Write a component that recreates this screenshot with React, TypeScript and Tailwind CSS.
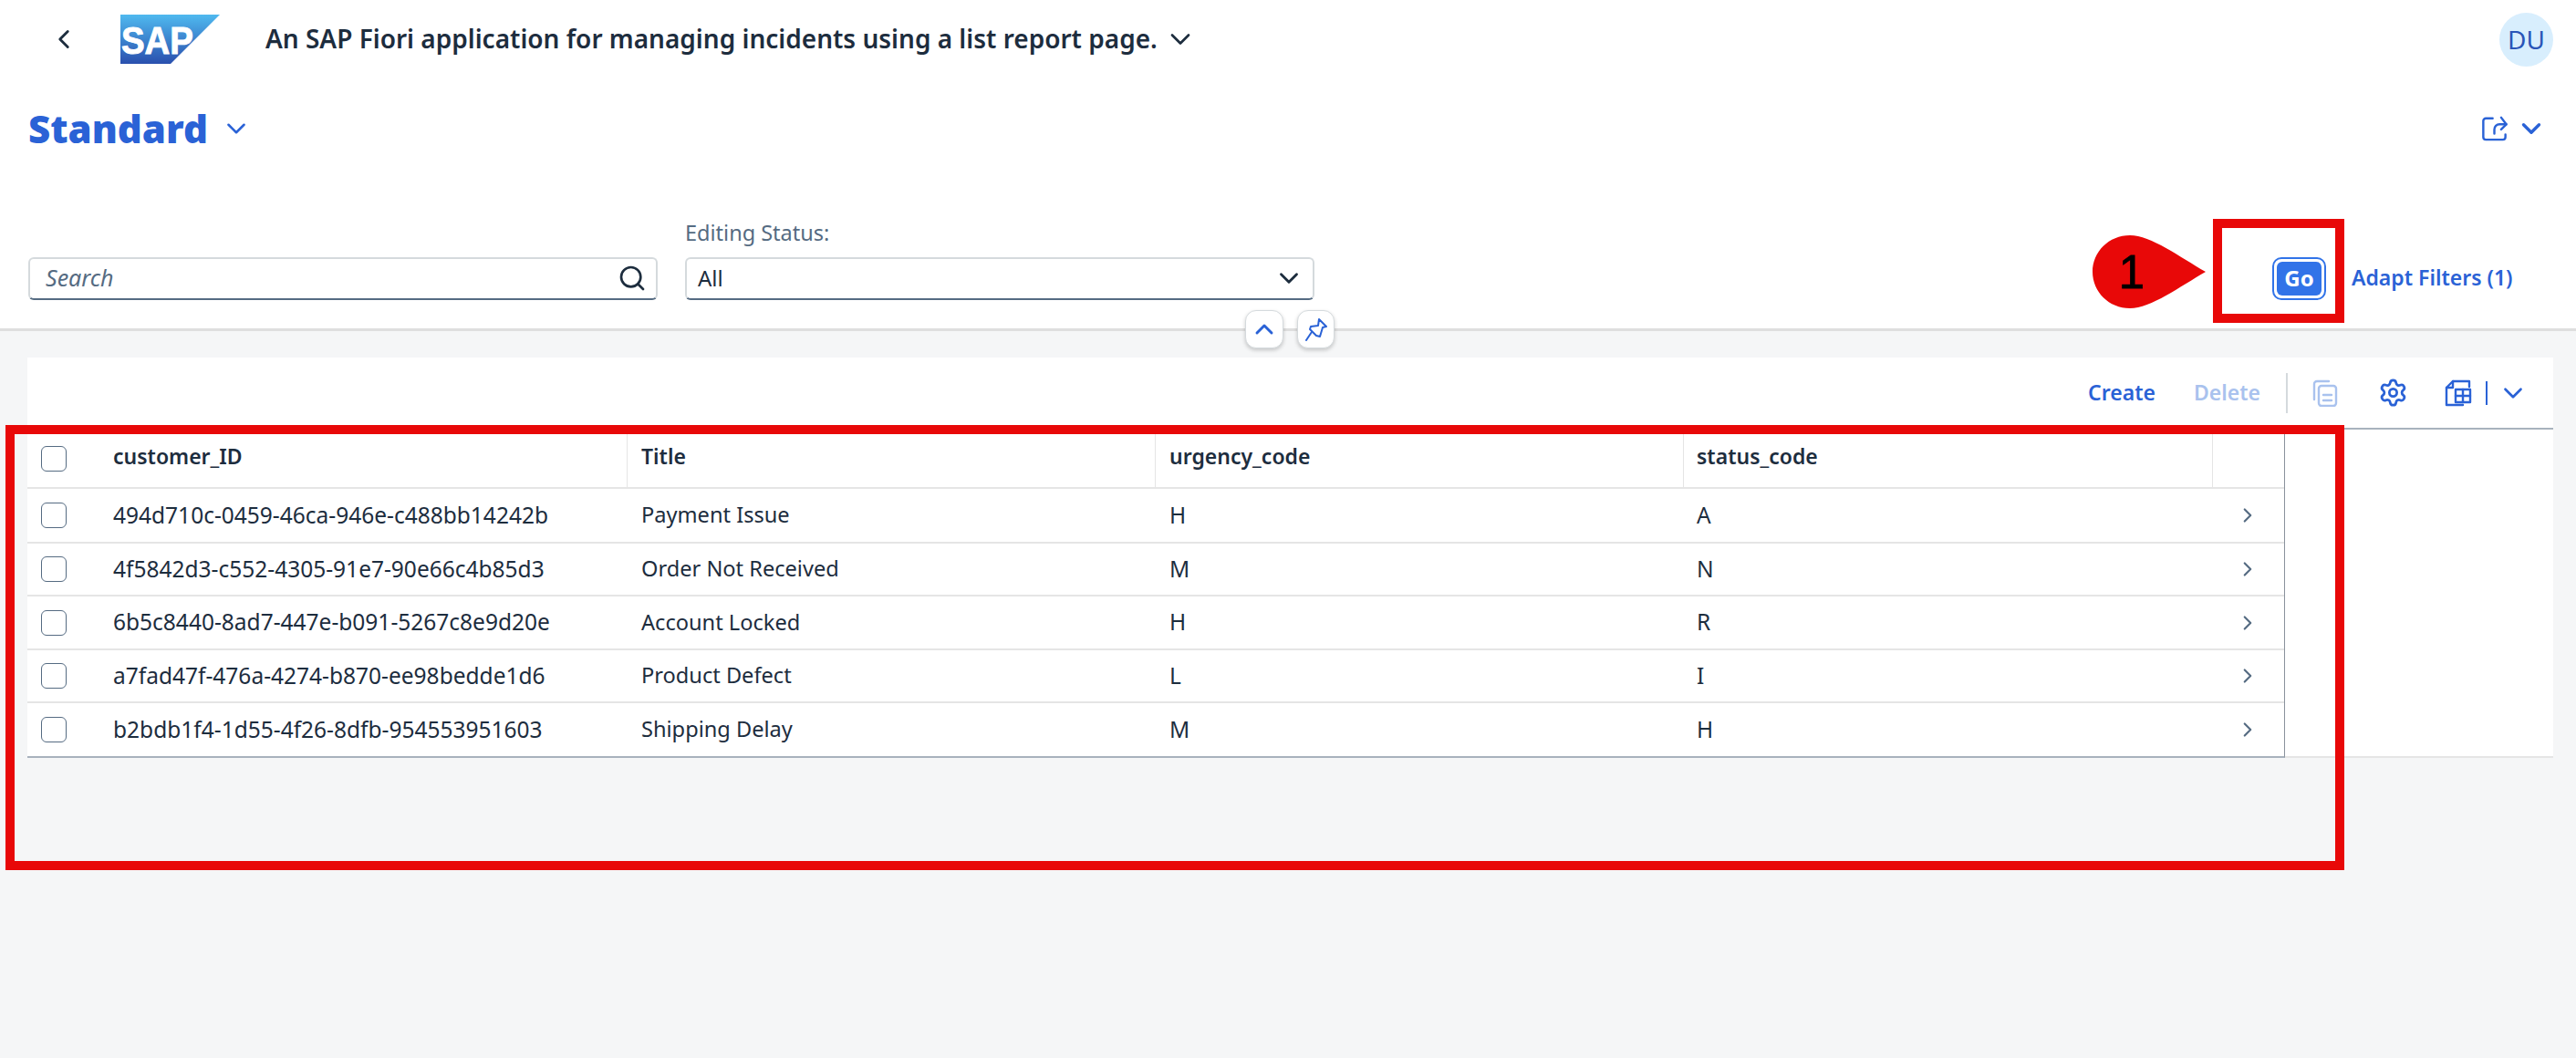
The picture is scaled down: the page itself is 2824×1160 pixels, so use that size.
import React from "react";
import { ChevronDown, ChevronLeft, ChevronRight, ChevronUp, Search, Settings } from "lucide-react";

const rows = [
  ["494d710c-0459-46ca-946e-c488bb14242b", "Payment Issue", "H", "A", "h-[60px]"],
  ["4f5842d3-c552-4305-91e7-90e66c4b85d3", "Order Not Received", "M", "N", "h-[58px]"],
  ["6b5c8440-8ad7-447e-b091-5267c8e9d20e", "Account Locked", "H", "R", "h-[59px]"],
  ["a7fad47f-476a-4274-b870-ee98bedde1d6", "Product Defect", "L", "I", "h-[58px]"],
  ["b2bdb1f4-1d55-4f26-8dfb-954553951603", "Shipping Delay", "M", "H", "h-[58px]"],
];

const grid = "grid grid-cols-[78px_579px_579px_579px_580px_80px]";

function Checkbox() {
  return <div className="w-[28px] h-[28px] ml-[15px] rounded-[6px] border border-[#556b82] bg-white" />;
}

function SapLogo() {
  return (
    <svg width="109" height="54" viewBox="0 0 109 54" className="block">
      <defs>
        <linearGradient id="sapg" x1="0" y1="0" x2="0" y2="1">
          <stop offset="0" stopColor="#4fb9ef" />
          <stop offset="1" stopColor="#2a50ae" />
        </linearGradient>
      </defs>
      <polygon points="0,0 109,0 55,54 0,54" fill="url(#sapg)" />
      <text x="1" y="43" fill="#fff" stroke="#fff" strokeWidth="1" fontFamily="'Liberation Sans', sans-serif" fontWeight="700" fontSize="43" textLength="79" lengthAdjust="spacingAndGlyphs">SAP</text>
    </svg>
  );
}

function ShareIcon() {
  return (
    <svg width="29" height="28" viewBox="0 0 30 30" fill="none" stroke="#2a62d6" strokeWidth="2.6" strokeLinecap="round" strokeLinejoin="round">
      <path d="M13 3H5a3 3 0 0 0-3 3v19a3 3 0 0 0 3 3h20a3 3 0 0 0 3-3v-3" />
      <path d="M15 21v-5a6 6 0 0 1 6-6h8" />
      <path d="M23 2l6 8-6 6" />
    </svg>
  );
}

function PinIcon() {
  return (
    <svg width="26" height="26" viewBox="0 0 26 26" fill="none" stroke="#2a62d6" strokeWidth="2" strokeLinejoin="round" strokeLinecap="round">
      <path d="M16 2l8 8-4 1-3 10-4-1-7-7 1-3 8-1z" />
      <path d="M8 16l-6 9" />
    </svg>
  );
}

function CopyIcon() {
  return (
    <svg width="28" height="30" viewBox="0 0 28 30" fill="none" stroke="#a9c2ee" strokeWidth="2.4" strokeLinecap="round" strokeLinejoin="round">
      <path d="M2 22V5a3 3 0 0 1 3-3h13" />
      <rect x="7" y="7" width="19" height="22" rx="3" />
      <path d="M12 17h9M12 23h9" />
    </svg>
  );
}

function TableIcon() {
  return (
    <svg width="30" height="30" viewBox="0 0 30 30" fill="none" stroke="#2a62d6" strokeWidth="2.4" strokeLinejoin="round" strokeLinecap="round">
      <path d="M20 28H2V9l7-7h18v6" />
      <path d="M9 2v7H2" />
      <rect x="12" y="11" width="16" height="14" fill="#fff" />
      <path d="M20 11v14M12 18h16" />
    </svg>
  );
}

export default function App() {
  return (
    <div className="relative w-[2824px] h-[1160px] overflow-hidden bg-[#f5f6f7] font-['Noto_Sans','Open_Sans',sans-serif] text-[24px] text-[#1d2d3e]">
      <div className="bg-white h-[363px] border-b-[3px] border-[#dedede] flex flex-col">
        <div className="h-[86px] flex items-center pl-[53px] pr-[25px]">
          <ChevronLeft className="w-[34px] h-[34px] text-[#1d2d3e]" strokeWidth={2} />
          <div className="ml-[45px]"><SapLogo /></div>
          <span className="ml-[50px] pb-[2px] text-[28px] font-semibold text-[#1d2d3e] leading-none">An SAP Fiori application for managing incidents using a list report page.</span>
          <ChevronDown className="ml-[7px] w-[36px] h-[36px] text-[#1d2d3e]" strokeWidth={1.8} />
          <div className="ml-auto w-[59px] h-[59px] rounded-full bg-[#d8eefd] text-[#2a55b8] text-[28px] flex items-center justify-center">DU</div>
        </div>
        <div className="h-[110px] flex items-center pl-[31px] pr-[32px] text-[#2a62d6]">
          <span className="text-[42px] font-black leading-none">Standard</span>
          <ChevronDown className="ml-[14px] w-[34px] h-[34px]" strokeWidth={1.8} />
          <div className="ml-auto flex items-center gap-[9px]">
            <ShareIcon />
            <ChevronDown className="w-[34px] h-[34px]" strokeWidth={2.4} />
          </div>
        </div>
        <div className="flex-1 flex items-end pl-[31px] pb-[31px]">
          <div className="w-[690px] h-[47px] rounded-[6px] border-2 border-[#d5dadd] border-b-[#556b82] bg-white flex items-center pl-[17px] pr-[10px] pb-[2px]">
            <span className="italic text-[#556b82] text-[25px]">Search</span>
            <Search className="ml-auto w-[32px] h-[32px] text-[#1d2d3e]" strokeWidth={2} />
          </div>
          <div className="ml-[30px] w-[690px] flex flex-col">
            <span className="text-[23.5px] leading-[30px] mb-[12px] text-[#556b82]">Editing Status:</span>
            <div className="h-[47px] rounded-[6px] border-2 border-[#d5dadd] border-b-[#556b82] bg-white flex items-center pl-[12px] pr-[9px] pb-[2px]">
              <span className="text-[24px]">All</span>
              <ChevronDown className="ml-auto w-[34px] h-[34px]" strokeWidth={2} />
            </div>
          </div>
          <div className="ml-[1050px] w-[59px] h-[47px] rounded-[10px] border-2 border-[#3173e8] bg-white p-[3px]">
            <div className="w-full h-full rounded-[6px] bg-[#3173e8] text-white font-bold text-[24px] pb-[2px] flex items-center justify-center">Go</div>
          </div>
          <span className="ml-[28px] h-[47px] pb-[2px] flex items-center text-[23px] font-semibold text-[#2a62d6] whitespace-nowrap">Adapt Filters (1)</span>
        </div>
      </div>

      <div className="pt-[29px] pl-[30px] pr-[25px]">
        <div className="bg-white h-[439px] border-b-2 border-[#e5e5e5]">
          <div className="h-[79px] border-b-2 border-[#a8b2bd] flex items-center justify-end pr-[27px] text-[#2a62d6]">
            <span className="font-semibold text-[23px]">Create</span>
            <span className="ml-[42px] font-semibold text-[23px] text-[#a9c2ee]">Delete</span>
            <div className="ml-[28px] w-[2px] h-[44px] bg-[#d5dadd]" />
            <div className="ml-[27px]"><CopyIcon /></div>
            <Settings className="ml-[44px] w-[33px] h-[33px]" strokeWidth={2} />
            <div className="ml-[40px]"><TableIcon /></div>
            <div className="ml-[15px] w-[2px] h-[26px] bg-[#2a62d6]" />
            <ChevronDown className="ml-[11px] w-[34px] h-[34px]" strokeWidth={1.9} />
          </div>
          <div className="w-[2475px] border-r border-[#8a929c] border-b-2 border-b-[#a8b2bd]">
            <div className={`${grid} h-[65px] border-b-2 border-[#e5e5e5] items-stretch font-semibold text-[23px]`}>
              <div className="flex items-center"><Checkbox /></div>
              <div className="flex items-center pl-[16px] pb-[4px] leading-none">customer_ID</div>
              <div className="flex items-center pl-[15px] pb-[4px] border-l border-[#e5e5e5] leading-none">Title</div>
              <div className="flex items-center pl-[15px] pb-[4px] border-l border-[#e5e5e5] leading-none">urgency_code</div>
              <div className="flex items-center pl-[14px] pb-[4px] border-l border-[#e5e5e5] leading-none">status_code</div>
              <div className="border-l border-[#e5e5e5]" />
            </div>
            {rows.map((r, i) => (
              <div key={r[0]} className={`${grid} ${r[4]} items-center text-[24.5px] ${i < 4 ? "border-b-2 border-[#e5e5e5]" : ""}`}>
                <Checkbox />
                <div className="pl-[16px] leading-none">{r[0]}</div>
                <div className="pl-[16px] leading-none text-[23.6px]">{r[1]}</div>
                <div className="pl-[16px] leading-none">{r[2]}</div>
                <div className="pl-[15px] leading-none">{r[3]}</div>
                <ChevronRight className="ml-[26px] w-[26px] h-[26px] text-[#556b82]" strokeWidth={2} />
              </div>
            ))}
          </div>
        </div>
      </div>

      {/* collapse and pin buttons sitting on the header edge */}
      <div className="absolute left-[1365px] top-[340px] w-[42px] h-[42px] rounded-[12px] bg-white border border-[#d5dadd] shadow-[0_2px_4px_rgba(0,0,0,0.2)] flex items-center justify-center text-[#2a62d6]">
        <ChevronUp className="w-[32px] h-[32px]" strokeWidth={2.2} />
      </div>
      <div className="absolute left-[1422px] top-[340px] w-[41px] h-[42px] rounded-[12px] bg-white border border-[#d5dadd] shadow-[0_2px_4px_rgba(0,0,0,0.2)] flex items-center justify-center">
        <PinIcon />
      </div>

      {/* red annotations */}
      <div className="absolute left-[2426px] top-[240px] w-[144px] h-[114px] border-[10px] border-[#e80808]" />
      <div className="absolute left-[6px] top-[466px] w-[2564px] h-[488px] border-[10px] border-[#e80808]" />
      <svg className="absolute left-[2294px] top-[258px]" width="124" height="80" viewBox="0 0 124 80">
        <path d="M41 0C64 0 96 24 124 40C96 56 64 80 41 80C18 80 0 62 0 40C0 18 18 0 41 0Z" fill="#e80808" />
        <text x="43" y="58" textAnchor="middle" fontFamily="'Liberation Sans', sans-serif" stroke="#000" strokeWidth="0.8" fontSize="51" fill="#000">1</text>
      </svg>
    </div>
  );
}
